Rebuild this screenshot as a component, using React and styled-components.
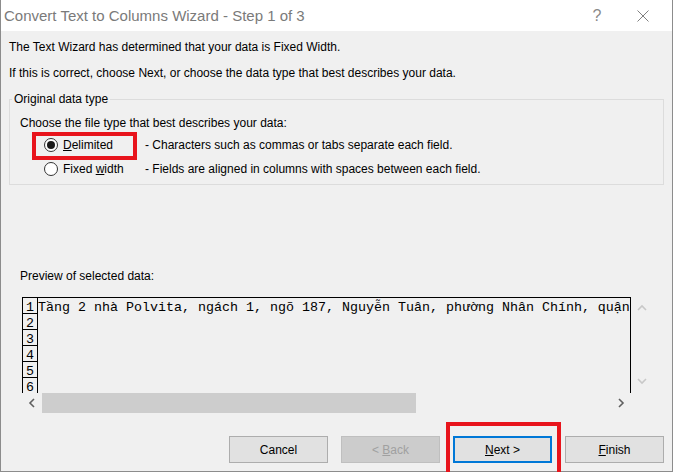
import React from 'react'
import styled, { createGlobalStyle, css } from 'styled-components'

const GlobalStyle = createGlobalStyle`
  html, body {
    margin: 0;
    padding: 0;
    background: #ffffff;
    overflow: hidden;
  }
  body {
    font-family: "Liberation Sans", Arial, sans-serif;
  }
`

const Window = styled.div`
  width: 673px;
  height: 472px;
  box-sizing: border-box;
  border: 1px solid #8c8c8c;
  border-top: none;
  background: #f0f0f0;
  display: flex;
  flex-direction: column;
`

const TitleBar = styled.div`
  height: 31px;
  flex: none;
  display: flex;
  align-items: center;
  padding: 0 6px 0 3px;
  background: #ffffff;
  color: #7a7a7a;
  font-size: 15px;
`

const Title = styled.div`
  flex: 1;
  white-space: nowrap;
`

const TitleButton = styled.div`
  width: 46px;
  height: 31px;
  display: flex;
  align-items: center;
  justify-content: center;
  color: #8a8a8a;
  font-size: 16px;
`

const Body = styled.div`
  flex: 1;
  padding: 8px 8px 0;
  font-size: 12px;
  color: #000;
`

const Line = styled.p`
  margin: ${p => p.$gap || 0}px 0 0;
  line-height: 16px;
  white-space: nowrap;
`

const GroupBox = styled.fieldset`
  margin: 10px 0 0;
  padding: 8px 10px 3px;
  border: 1px solid #dcdcdc;
  min-width: 0;
`

const Legend = styled.legend`
  padding: 0 2px;
  margin-left: -8px;
  line-height: 16px;
`

const OptionGrid = styled.div`
  margin-top: 2px;
  display: grid;
  grid-template-columns: 125px 1fr;
  grid-auto-rows: 24px;
  align-items: center;
`

const redBox = css`
  &::after {
    content: "";
    position: absolute;
    box-sizing: border-box;
    border: 4px solid #e8141c;
    pointer-events: none;
  }
`

const OptionLabel = styled.label`
  position: relative;
  height: 100%;
  display: flex;
  align-items: center;
  gap: 5px;
  padding-left: 24px;
  ${p => p.$highlight && redBox}
  &::after {
    left: 12px;
    right: 8px;
    top: -1px;
    bottom: -3px;
  }
`

const Radio = styled.span`
  width: 14px;
  height: 14px;
  box-sizing: border-box;
  border-radius: 50%;
  border: 1px solid #333;
  background: #fff;
  display: flex;
  align-items: center;
  justify-content: center;
  &::before {
    content: "";
    width: 8px;
    height: 8px;
    border-radius: 50%;
    background: ${p => (p.$checked ? '#1a1a1a' : 'transparent')};
  }
`

const PreviewLabel = styled.p`
  margin: 83px 0 0 11px;
  line-height: 16px;
`

const Preview = styled.div`
  margin: 13px 0 0 13px;
  display: grid;
  grid-template-columns: 609px 21px;
  grid-template-rows: 96px 20px;
`

const DataGrid = styled.div`
  border: 1px solid #000;
  border-bottom: none;
  overflow: hidden;
  font-family: "Liberation Mono", "Courier New", monospace;
  font-size: 13.33px;
`

const DataRow = styled.div`
  display: grid;
  grid-template-columns: 15px 1fr;
  height: 16px;
  line-height: 16px;
`

const RowNum = styled.div`
  box-sizing: border-box;
  height: 16px;
  padding: 2px 3px 0 0;
  border-right: 1px solid #000;
  border-bottom: 1px solid #000;
  text-align: right;
`

const RowText = styled.div`
  padding-top: 2px;
  white-space: nowrap;
`

const VScroll = styled.div`
  display: flex;
  flex-direction: column;
  justify-content: space-between;
  align-items: center;
  padding: 7px 0 8px;
`

const HScroll = styled.div`
  display: flex;
  align-items: stretch;
`

const ScrollButton = styled.div`
  width: 20px;
  flex: none;
  display: flex;
  align-items: center;
  justify-content: center;
`

const Thumb = styled.div`
  width: 374px;
  background: #cdcdcd;
`

const Track = styled.div`
  flex: 1;
`

const ButtonRow = styled.div`
  margin-top: 23px;
  display: flex;
  justify-content: flex-end;
  gap: 13px;
`

const Button = styled.button`
  position: relative;
  width: 99px;
  height: 27px;
  box-sizing: border-box;
  padding: 0;
  font-family: "Liberation Sans", Arial, sans-serif;
  font-size: 12px;
  color: #000;
  background: #e1e1e1;
  border: 1px solid #adadad;
  ${p => p.$primary && css`
    border: 2px solid #0078d7;
  `}
  ${p => p.disabled && css`
    background: #cccccc;
    border-color: #bfbfbf;
    color: #a0a0a0;
  `}
  ${p => p.$highlight && redBox}
  &::after {
    left: -9px;
    right: -11px;
    top: -16px;
    bottom: -16px;
  }
`

const Arrow = ({ dir, color }) => {
  const pts = {
    left: '6,1 2,5 6,9',
    right: '2,1 6,5 2,9',
    up: '1,6 5,2 9,6',
    down: '1,2 5,6 9,2',
  }[dir]
  const horiz = dir === 'left' || dir === 'right'
  return (
    <svg width={horiz ? 8 : 10} height={horiz ? 10 : 8} viewBox={horiz ? '0 0 8 10' : '0 0 10 8'}>
      <polyline points={pts} fill="none" stroke={color} strokeWidth="1.6" />
    </svg>
  )
}

const CloseIcon = () => (
  <svg width="12" height="12" viewBox="0 0 12 12">
    <path d="M0.5 0.5 L11.5 11.5 M11.5 0.5 L0.5 11.5" stroke="#808080" strokeWidth="1" fill="none" />
  </svg>
)

const rows = [
  'Tầng 2 nhà Polvita, ngách 1, ngõ 187, Nguyễn Tuân, phường Nhân Chính, quận',
  '', '', '', '', '',
]

const App = () => {
  return (
    <Window>
      <GlobalStyle />
      <TitleBar>
        <Title>Convert Text to Columns Wizard - Step 1 of 3</Title>
        <TitleButton>?</TitleButton>
        <TitleButton><CloseIcon /></TitleButton>
      </TitleBar>
      <Body>
        <Line>The Text Wizard has determined that your data is Fixed Width.</Line>
        <Line $gap={10}>If this is correct, choose Next, or choose the data type that best describes your data.</Line>
        <GroupBox>
          <Legend>Original data type</Legend>
          <Line>Choose the file type that best describes your data:</Line>
          <OptionGrid>
            <OptionLabel $highlight>
              <Radio $checked />
              <span><u>D</u>elimited</span>
            </OptionLabel>
            <span>- Characters such as commas or tabs separate each field.</span>
            <OptionLabel>
              <Radio />
              <span>Fixed <u>w</u>idth</span>
            </OptionLabel>
            <span>- Fields are aligned in columns with spaces between each field.</span>
          </OptionGrid>
        </GroupBox>
        <PreviewLabel>Preview of selected data:</PreviewLabel>
        <Preview>
          <DataGrid>
            {rows.map((text, i) => (
              <DataRow key={i}>
                <RowNum>{i + 1}</RowNum>
                <RowText>{text}</RowText>
              </DataRow>
            ))}
          </DataGrid>
          <VScroll>
            <Arrow dir="up" color="#c8c8c8" />
            <Arrow dir="down" color="#c8c8c8" />
          </VScroll>
          <HScroll>
            <ScrollButton><Arrow dir="left" color="#606060" /></ScrollButton>
            <Thumb />
            <Track />
            <ScrollButton><Arrow dir="right" color="#606060" /></ScrollButton>
          </HScroll>
        </Preview>
        <ButtonRow>
          <Button>Cancel</Button>
          <Button disabled>&lt; <u>B</u>ack</Button>
          <Button $primary $highlight><u>N</u>ext &gt;</Button>
          <Button><u>F</u>inish</Button>
        </ButtonRow>
      </Body>
    </Window>
  )
}

export default App
